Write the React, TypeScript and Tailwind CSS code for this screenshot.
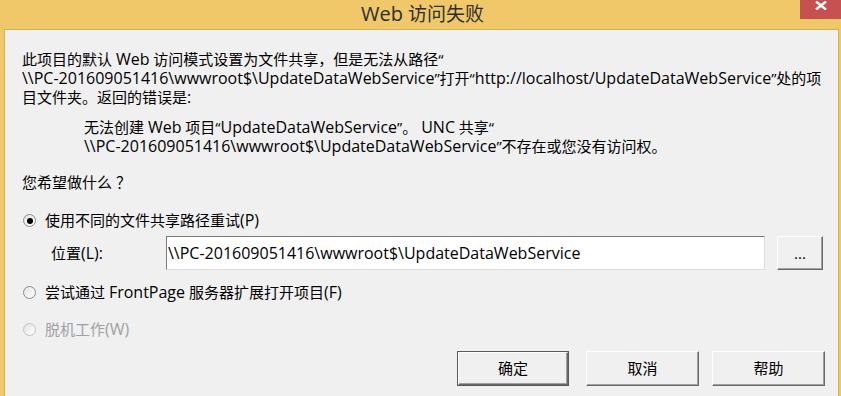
import React from 'react';

// Windows 8 风格的 "Web 访问失败" 对话框

const font = "font-['Open_Sans','Noto_Sans_CJK_SC',sans-serif]";

// 拉丁文字片段稍大一些（雅黑 UI 的西文字形偏大）
function L({ children }: { children: React.ReactNode }) {
  return <span className="inline-block text-[16px] leading-[19px] whitespace-nowrap">{children}</span>;
}

function Radio({ checked, disabled }: { checked?: boolean; disabled?: boolean }) {
  return (
    <span
      className={`flex items-center justify-center w-[13px] h-[13px] rounded-full border bg-gradient-to-br from-[#e2e2e2] to-white ${
        disabled ? 'border-[#c4c4c4]' : 'border-[#8c8c8c]'
      }`}
    >
      {checked && <span className="w-[6px] h-[6px] rounded-full bg-black" />}
    </span>
  );
}

function Button({ label, isDefault, className = '' }: { label: React.ReactNode; isDefault?: boolean; className?: string }) {
  return (
    <div className={`${isDefault ? 'border border-[#5a5a5a]' : ''} ${className}`}>
      <div className="w-full h-full flex items-center justify-center bg-[#f0f0f0] border-t border-l border-white border-b border-r border-b-[#696969] border-r-[#696969] shadow-[inset_-1px_-1px_0_#a0a0a0] text-[15px] text-black">
        {label}
      </div>
    </div>
  );
}

export default function App() {
  return (
    <div className={`w-[841px] h-[396px] bg-[#f0c86a] flex flex-col overflow-hidden ${font}`}>
      {/* 标题栏 */}
      <div className="relative h-[29px] flex items-center justify-center">
        <span className="text-[19px] text-[#2e2e2e] leading-none -mt-[2px] pl-[4px]">
          <span className="text-[20px]">Web</span> 访问失败
        </span>
        <div className="absolute right-0 top-0 w-[41px] h-[19px] bg-[#c75050] flex justify-center pt-[1px]">
          <svg width="12" height="9" viewBox="0 0 12 9">
            <path d="M1 0.5 L11 8.5 M11 0.5 L1 8.5" stroke="white" strokeWidth="2.4" />
          </svg>
        </div>
      </div>

      {/* 内容 */}
      <div className="flex-1 ml-[4px] mr-[2px] bg-[#f0f0f0] border-t border-l border-r border-[#d6b056] pl-[17px] text-[15px] leading-[19px] text-black">
        <p className="mt-[20px] whitespace-nowrap">
          此项目的默认 <L>Web</L> 访问模式设置为文件共享，但是无法从路径“
          <br />
          <L>\\PC-201609051416\wwwroot$\UpdateDataWebService</L>”打开“<L>http://localhost/UpdateDataWebService</L>”处的项
          <br />
          目文件夹。返回的错误是<L>:</L>
        </p>
        <p className="mt-[11px] ml-[62px] whitespace-nowrap">
          无法创建 <L>Web</L> 项目“<L>UpdateDataWebService</L>”。 <L>UNC</L> 共享“
          <br />
          <L>\\PC-201609051416\wwwroot$\UpdateDataWebService</L>”不存在或您没有访问权。
        </p>
        <p className="mt-[17px]">您希望做什么 ？</p>

        <label className="mt-[19px] h-[19px] flex items-center gap-[9px] pl-[1px]">
          <Radio checked />
          <span>使用不同的文件共享路径重试<L>(P)</L></span>
        </label>

        <div className="mt-[6px] h-[34px] flex items-center">
          <span className="w-[144px] pl-[29px]">
            位置<L>(L):</L>
          </span>
          <div className="w-[599px] h-[34px] bg-white border border-[#dcdcdc] border-t-[#7a7a7a] border-l-[#7a7a7a] flex items-center pl-[1px] whitespace-nowrap">
            <L>\\PC-201609051416\wwwroot$\UpdateDataWebService</L>
          </div>
          <Button label="..." className="ml-[12px] w-[46px] h-[34px]" />
        </div>

        <label className="mt-[13px] h-[19px] flex items-center gap-[9px] pl-[1px]">
          <Radio />
          <span>
            尝试通过 <L>FrontPage</L> 服务器扩展打开项目<L>(F)</L>
          </span>
        </label>

        <label className="mt-[18px] h-[19px] flex items-center gap-[9px] pl-[1px] text-[#a0a0a0]">
          <Radio disabled />
          <span>
            脱机工作<L>(W)</L>
          </span>
        </label>

        <div className="mt-[12px] flex pl-[435px]">
          <Button label="确定" isDefault className="w-[112px] h-[35px]" />
          <Button label="取消" className="ml-[17px] w-[113px] h-[35px]" />
          <Button label="帮助" className="ml-[13px] w-[113px] h-[35px]" />
        </div>
      </div>
    </div>
  );
}
